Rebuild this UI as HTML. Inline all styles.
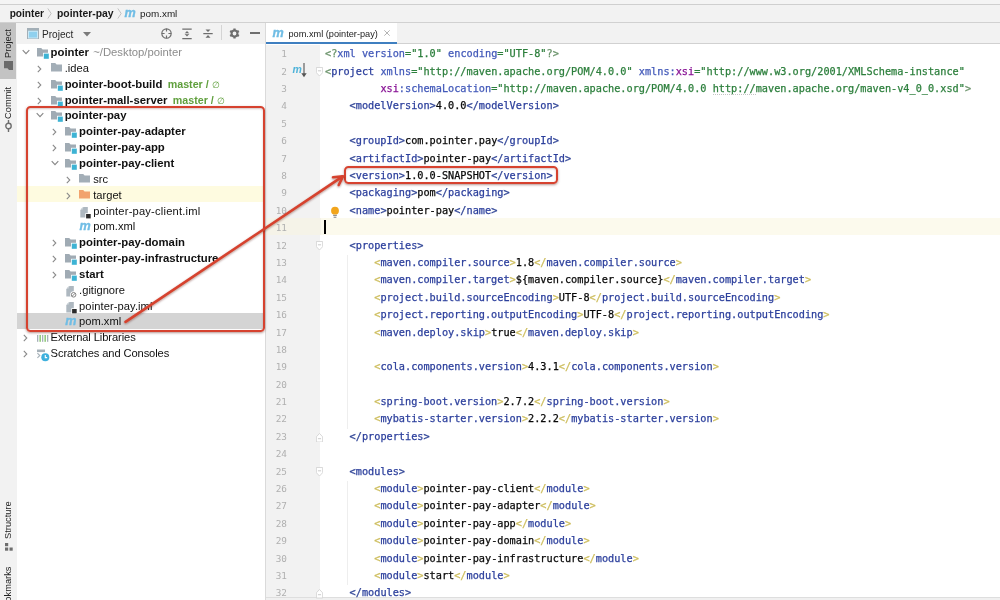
<!DOCTYPE html>
<html><head><meta charset="utf-8"><title>pom.xml</title>
<style>
*{box-sizing:border-box;margin:0;padding:0}
html,body{width:1000px;height:600px;overflow:hidden;background:#fff}
body{position:relative;will-change:transform;font-family:"Liberation Sans", sans-serif;font-size:11px;color:#1a1a1a}
.abs{position:absolute}
#topstrip{left:0;top:0;width:1000px;height:5px;background:#f4f4f4;border-bottom:1px solid #cfcfcf}
#crumb{left:0;top:5px;width:1000px;height:17.500px;background:#f2f2f2;border-bottom:1px solid #d1d1d1}
#crumb span{position:absolute;top:-0.500px;line-height:18px;font-size:9.900px;white-space:nowrap}
#crumb .b{font-weight:bold;font-size:10.400px}
#stripe{left:0;top:23px;width:17px;height:577px;background:#f2f2f2}
.vt{position:absolute;left:0;width:16px;font-size:9.300px;white-space:nowrap;color:#222}
.vt span{position:absolute;transform-origin:0 0;transform:rotate(-90deg);line-height:16px;left:0}
#phead{left:17px;top:23px;width:248px;height:21px;background:#f2f2f2}
#phead .ttl{position:absolute;left:25px;top:1px;line-height:21px;font-size:10.100px;color:#2a2a2a}
#tree{left:17px;top:44px;width:248px;height:556px;background:#fff;overflow:hidden}
#pborder{left:265px;top:23px;width:1px;height:577px;background:#dadada}
.row{position:absolute;left:0;width:248px;height:15.85px;white-space:nowrap}
.row.sel{background:transparent}
#selbg{left:17px;top:313px;width:248px;height:16.300px;background:#d4d4d4}
.row.excl{background:transparent}
#exbg{left:17px;top:186.200px;width:248px;height:15.700px;background:#fefbe0}
.row span.arw,.row span.ico,.row span.lbl{position:absolute;top:0;height:15.85px;line-height:15.85px}
.row .lbl{font-size:11.150px;color:#111}
.row .lbl.b{font-size:11.350px}
.row .lbl.b{font-weight:bold}
.row .path{font-weight:normal;color:#8c8c8c;margin-left:1px;font-size:11.300px}
.row .git i{font-style:normal;font-weight:normal;font-size:8.500px}
.row .git{font-weight:bold;color:#5f9f3c;margin-left:2.200px;font-size:10.700px}
.row svg.ic{position:absolute;top:3.100px;left:0}
.row svg.ar{position:absolute;top:3px;left:0}
.mvn{font-style:italic;font-weight:bold;color:#70bde5;-webkit-text-stroke:0.350px #70bde5;font-size:12.600px;font-family:"Liberation Sans", sans-serif;position:absolute;left:0;top:-0.850px;line-height:15.85px}
#tabs{left:266px;top:23px;width:734px;height:21px;background:#f2f2f2;border-bottom:1px solid #d1d1d1}
#tab{left:266px;top:23px;width:131px;height:21px;background:#fff}
#tabline{left:266px;top:41.600px;width:131px;height:2.500px;background:#3f7fc0}
#gutter{left:266px;top:45px;width:54.500px;height:555px;background:#f2f2f2;border-right:1px solid #e2e2e2}
#editor{left:320px;top:45px;width:681px;height:555px;background:#fff}
#curline{left:320.500px;top:218.20px;width:681px;height:17.300px;background:#fcfaed}
#curline2{left:266px;top:218.20px;width:54.500px;height:17.300px;background:#f5f3e8}
.cl{position:absolute;left:325px;height:17.39px;line-height:17.39px;font-family:"DejaVu Sans Mono", "Liberation Mono", monospace;font-size:10.230px;white-space:pre;color:#080808;-webkit-text-stroke:0.250px currentColor}
.cl span{-webkit-text-stroke:0.250px currentColor}
.ln{position:absolute;left:262px;width:25px;text-align:right;height:17.39px;line-height:17.39px;font-family:"DejaVu Sans Mono", "Liberation Mono", monospace;font-size:9.400px;color:#b0b0b0}
.t{color:#2d409d}.a{color:#4259b9}.b0{color:#6a936a}.b1{color:#2f4496}.b2{color:#cdbd5c}.p{color:#871094}.v{color:#2c7f3c}.x{color:#080808}.g{color:#6a936a}
.u{color:#2c7f3c;border-bottom:1px dotted #c4c4c4}
.redbox{border:2.500px solid #d6422f;border-radius:4.500px;box-shadow:0 1px 2.500px rgba(90,20,10,.45), inset 0 1px 2px rgba(90,20,10,.25)}
</style></head><body>
<div id="topstrip" class="abs"></div>
<div id="crumb" class="abs">
 <span class="b" style="left:9.700px;font-size:10.150px">pointer</span>
 <svg class="abs" style="left:46.800px;top:2px" width="5" height="13" viewBox="0 0 6 13"><path d="M1 0.5l4 6-4 6" fill="none" stroke="#b8b8b8" stroke-width="1"/></svg>
 <span class="b" style="left:57px">pointer-pay</span>
 <svg class="abs" style="left:117px;top:2px" width="5" height="13" viewBox="0 0 6 13"><path d="M1 0.5l4 6-4 6" fill="none" stroke="#b8b8b8" stroke-width="1"/></svg>
 <span class="mvn" style="left:124.500px;top:-1.400px;line-height:18px;font-size:12.600px">m</span>
 <span style="left:140px">pom.xml</span>
</div>
<div id="stripe" class="abs"></div>
<div class="abs" style="left:0;top:23px;width:16px;height:56px;background:#c3c3c3"></div>
<div class="vt" style="top:58px"><span>Project</span></div>
<svg class="abs" style="left:4px;top:61px" width="9" height="9" viewBox="0 0 9 9"><path d="M0 0h9v9h-4l-1.500-1.800h-3.500z" fill="#6a6a6a"/></svg>
<div class="vt" style="top:119px"><span>Commit</span></div>
<svg class="abs" style="left:3px;top:120px" width="11" height="12" viewBox="0 0 11 12"><circle cx="5.500" cy="6" r="2.700" fill="none" stroke="#6e6e6e" stroke-width="1.400"/><path d="M5.500 0v3.300M5.500 8.700V12" stroke="#6e6e6e" stroke-width="1.400"/></svg>
<div class="vt" style="top:539px"><span>Structure</span></div>
<svg class="abs" style="left:5px;top:543px" width="8" height="8" viewBox="0 0 8 8"><g fill="#6e6e6e"><rect x="0" y="0" width="3.200" height="3.200"/><rect x="0" y="4.500" width="3.200" height="3.200"/><rect x="4.500" y="4.500" width="3.200" height="3.200"/></g></svg>
<div class="vt" style="top:613px"><span>Bookmarks</span></div>
<div id="phead" class="abs">
 <svg class="abs" style="left:10px;top:5px" width="12" height="11" viewBox="0 0 12 11"><rect x="0.500" y="0.500" width="11" height="10" fill="#8fd0ee" stroke="#a3afb7"/><rect x="0.500" y="0.500" width="11" height="2.300" fill="#a3afb7"/><rect x="1.500" y="3.300" width="9" height="6.700" fill="none" stroke="#c9e8f6" stroke-width="1"/></svg>
 <span class="ttl">Project</span>
 <svg class="abs" style="left:66px;top:9px" width="8" height="5" viewBox="0 0 8 5"><path d="M0 0h8l-4 4.5z" fill="#7a7a7a"/></svg>
 <svg class="abs" style="left:143.300px;top:3.800px" width="13" height="13" viewBox="0 0 13 13"><circle cx="6.500" cy="6.500" r="4.700" fill="none" stroke="#6e6e6e" stroke-width="1.150"/><path d="M6.500 1.800v2.800M6.500 8.400v2.800M1.800 6.500h2.800M8.400 6.500h2.800" stroke="#6e6e6e" stroke-width="1.150"/></svg>
 <svg class="abs" style="left:165.200px;top:4.500px" width="10" height="12" viewBox="0 0 10 12"><path d="M0.300 1.100h9.400M0.300 10.500h9.400" stroke="#6e6e6e" stroke-width="1.250"/><path d="M5 3l2.400 2.500h-4.800zM5 8.600l2.400-2.500h-4.800z" fill="#6e6e6e" transform="translate(0,0)"/><path d="M3.200 5.800h3.600" stroke="#f2f2f2" stroke-width="0.700"/></svg>
 <svg class="abs" style="left:186.100px;top:4.500px" width="10" height="12" viewBox="0 0 10 12"><path d="M0.300 5.600h9.400" stroke="#6e6e6e" stroke-width="1.250"/><path d="M5 4.100l2.500-2.700h-5zM5 7.100l2.500 2.700h-5z" fill="#6e6e6e"/></svg>
 <div class="abs" style="left:203.600px;top:2px;width:1px;height:15px;background:#d4d4d4"></div>
 <svg class="abs" style="left:211.700px;top:4.700px" width="11" height="11" viewBox="-5.500 -5.500 11 11"><g fill="#6e6e6e"><rect x="-1.150" y="-5" width="2.300" height="2.400" transform="rotate(0)"/><rect x="-1.150" y="-5" width="2.300" height="2.400" transform="rotate(60)"/><rect x="-1.150" y="-5" width="2.300" height="2.400" transform="rotate(120)"/><rect x="-1.150" y="-5" width="2.300" height="2.400" transform="rotate(180)"/><rect x="-1.150" y="-5" width="2.300" height="2.400" transform="rotate(240)"/><rect x="-1.150" y="-5" width="2.300" height="2.400" transform="rotate(300)"/></g><circle cx="0" cy="0" r="2.900" fill="none" stroke="#6e6e6e" stroke-width="2"/></svg>
 <div class="abs" style="left:233px;top:9.400px;width:9.500px;height:1.300px;background:#6e6e6e"></div>
</div>
<div id="selbg" class="abs"></div><div id="exbg" class="abs"></div>
<div id="tree" class="abs" style="top:0;height:600px;background:transparent">
<div class="row" style="top:45.00px"><span class="arw" style="left:4.0px"><svg class="ar" width="10" height="8" viewBox="0 0 10 8"><path d="M1.700 2.200l3.300 3.400 3.300-3.400" fill="none" stroke="#888" stroke-width="1.150"/></svg></span><span class="ico" style="left:19.8px"><svg class="ic" width="13" height="12" viewBox="0 0 13 12"><path d="M0 0h4.200l1.400 1.500h5.400v7h-11z" fill="#a0abb4"/><rect x="6" y="4.800" width="6.200" height="6.500" fill="#ffffff"/><rect x="6.800" y="5.600" width="5" height="5.200" fill="#3db3d4"/></svg></span><span class="lbl b" style="left:33.6px">pointer <span class="path">~/Desktop/pointer</span></span></div>
<div class="row" style="top:60.85px"><span class="arw" style="left:18.0px"><svg class="ar" width="8" height="10" viewBox="0 0 8 10"><path d="M2.800 1.800l3 3.200-3 3.200" fill="none" stroke="#8a8a8a" stroke-width="1.100"/></svg></span><span class="ico" style="left:34.0px"><svg class="ic" style="top:2.400px" width="13" height="12" viewBox="0 0 13 12"><path d="M0 0h4.200l1.400 1.500h5.400v7h-11z" fill="#a3aeb7"/></svg></span><span class="lbl" style="left:47.7px">.idea</span></div>
<div class="row" style="top:76.70px"><span class="arw" style="left:18.0px"><svg class="ar" width="8" height="10" viewBox="0 0 8 10"><path d="M2.800 1.800l3 3.200-3 3.200" fill="none" stroke="#8a8a8a" stroke-width="1.100"/></svg></span><span class="ico" style="left:34.0px"><svg class="ic" width="13" height="12" viewBox="0 0 13 12"><path d="M0 0h4.200l1.400 1.500h5.400v7h-11z" fill="#a0abb4"/><rect x="6" y="4.800" width="6.200" height="6.500" fill="#ffffff"/><rect x="6.800" y="5.600" width="5" height="5.200" fill="#3db3d4"/></svg></span><span class="lbl b" style="left:47.7px">pointer-boot-build <span class="git">master / <i>∅</i></span></span></div>
<div class="row" style="top:92.55px"><span class="arw" style="left:18.0px"><svg class="ar" width="8" height="10" viewBox="0 0 8 10"><path d="M2.800 1.800l3 3.200-3 3.200" fill="none" stroke="#8a8a8a" stroke-width="1.100"/></svg></span><span class="ico" style="left:34.0px"><svg class="ic" width="13" height="12" viewBox="0 0 13 12"><path d="M0 0h4.200l1.400 1.500h5.400v7h-11z" fill="#a0abb4"/><rect x="6" y="4.800" width="6.200" height="6.500" fill="#ffffff"/><rect x="6.800" y="5.600" width="5" height="5.200" fill="#3db3d4"/></svg></span><span class="lbl b" style="left:47.7px">pointer-mall-server <span class="git">master / <i>∅</i></span></span></div>
<div class="row" style="top:108.40px"><span class="arw" style="left:18.0px"><svg class="ar" width="10" height="8" viewBox="0 0 10 8"><path d="M1.700 2.200l3.300 3.400 3.300-3.400" fill="none" stroke="#888" stroke-width="1.150"/></svg></span><span class="ico" style="left:34.0px"><svg class="ic" width="13" height="12" viewBox="0 0 13 12"><path d="M0 0h4.200l1.400 1.500h5.400v7h-11z" fill="#a0abb4"/><rect x="6" y="4.800" width="6.200" height="6.500" fill="#ffffff"/><rect x="6.800" y="5.600" width="5" height="5.200" fill="#3db3d4"/></svg></span><span class="lbl b" style="left:47.7px">pointer-pay</span></div>
<div class="row" style="top:124.25px"><span class="arw" style="left:32.5px"><svg class="ar" width="8" height="10" viewBox="0 0 8 10"><path d="M2.800 1.800l3 3.200-3 3.200" fill="none" stroke="#8a8a8a" stroke-width="1.100"/></svg></span><span class="ico" style="left:48.3px"><svg class="ic" width="13" height="12" viewBox="0 0 13 12"><path d="M0 0h4.200l1.400 1.500h5.400v7h-11z" fill="#a0abb4"/><rect x="6" y="4.800" width="6.200" height="6.500" fill="#ffffff"/><rect x="6.800" y="5.600" width="5" height="5.200" fill="#3db3d4"/></svg></span><span class="lbl b" style="left:62.1px">pointer-pay-adapter</span></div>
<div class="row" style="top:140.10px"><span class="arw" style="left:32.5px"><svg class="ar" width="8" height="10" viewBox="0 0 8 10"><path d="M2.800 1.800l3 3.200-3 3.200" fill="none" stroke="#8a8a8a" stroke-width="1.100"/></svg></span><span class="ico" style="left:48.3px"><svg class="ic" width="13" height="12" viewBox="0 0 13 12"><path d="M0 0h4.200l1.400 1.500h5.400v7h-11z" fill="#a0abb4"/><rect x="6" y="4.800" width="6.200" height="6.500" fill="#ffffff"/><rect x="6.800" y="5.600" width="5" height="5.200" fill="#3db3d4"/></svg></span><span class="lbl b" style="left:62.1px">pointer-pay-app</span></div>
<div class="row" style="top:155.95px"><span class="arw" style="left:32.5px"><svg class="ar" width="10" height="8" viewBox="0 0 10 8"><path d="M1.700 2.200l3.300 3.400 3.300-3.400" fill="none" stroke="#888" stroke-width="1.150"/></svg></span><span class="ico" style="left:48.3px"><svg class="ic" width="13" height="12" viewBox="0 0 13 12"><path d="M0 0h4.200l1.400 1.500h5.400v7h-11z" fill="#a0abb4"/><rect x="6" y="4.800" width="6.200" height="6.500" fill="#ffffff"/><rect x="6.800" y="5.600" width="5" height="5.200" fill="#3db3d4"/></svg></span><span class="lbl b" style="left:62.1px">pointer-pay-client</span></div>
<div class="row" style="top:171.80px"><span class="arw" style="left:46.5px"><svg class="ar" width="8" height="10" viewBox="0 0 8 10"><path d="M2.800 1.800l3 3.200-3 3.200" fill="none" stroke="#8a8a8a" stroke-width="1.100"/></svg></span><span class="ico" style="left:62.4px"><svg class="ic" style="top:2.400px" width="13" height="12" viewBox="0 0 13 12"><path d="M0 0h4.200l1.400 1.500h5.400v7h-11z" fill="#a3aeb7"/></svg></span><span class="lbl" style="left:76.2px">src</span></div>
<div class="row excl" style="top:187.65px"><span class="arw" style="left:46.5px"><svg class="ar" width="8" height="10" viewBox="0 0 8 10"><path d="M2.800 1.800l3 3.200-3 3.200" fill="none" stroke="#8a8a8a" stroke-width="1.100"/></svg></span><span class="ico" style="left:62.4px"><svg class="ic" style="top:2.400px" width="13" height="12" viewBox="0 0 13 12"><path d="M0 0h4.200l1.400 1.500h5.400v7h-11z" fill="#f2a36d"/></svg></span><span class="lbl" style="left:76.2px">target</span></div>
<div class="row" style="top:203.50px"><span class="ico" style="left:62.4px"><svg class="ic" width="13" height="13" viewBox="-1.300 0 13 13"><path d="M3.200 0h4.300v10.400h-7.500v-7.200z" fill="#aeb8c0"/><path d="M2.600 0v2.600h-2.600z" fill="#ccd3d8"/><rect x="5" y="6.200" width="5.800" height="5.600" fill="#fff"/><rect x="5.800" y="7" width="4.600" height="4.400" fill="#2b2b2b"/></svg></span><span class="lbl" style="left:76.2px;letter-spacing:0.20px">pointer-pay-client.iml</span></div>
<div class="row" style="top:219.35px"><span class="ico" style="left:62.4px"><span class="ic mvn">m</span></span><span class="lbl" style="left:76.2px">pom.xml</span></div>
<div class="row" style="top:235.20px"><span class="arw" style="left:32.5px"><svg class="ar" width="8" height="10" viewBox="0 0 8 10"><path d="M2.800 1.800l3 3.200-3 3.200" fill="none" stroke="#8a8a8a" stroke-width="1.100"/></svg></span><span class="ico" style="left:48.3px"><svg class="ic" width="13" height="12" viewBox="0 0 13 12"><path d="M0 0h4.200l1.400 1.500h5.400v7h-11z" fill="#a0abb4"/><rect x="6" y="4.800" width="6.200" height="6.500" fill="#ffffff"/><rect x="6.800" y="5.600" width="5" height="5.200" fill="#3db3d4"/></svg></span><span class="lbl b" style="left:62.1px">pointer-pay-domain</span></div>
<div class="row" style="top:251.05px"><span class="arw" style="left:32.5px"><svg class="ar" width="8" height="10" viewBox="0 0 8 10"><path d="M2.800 1.800l3 3.200-3 3.200" fill="none" stroke="#8a8a8a" stroke-width="1.100"/></svg></span><span class="ico" style="left:48.3px"><svg class="ic" width="13" height="12" viewBox="0 0 13 12"><path d="M0 0h4.200l1.400 1.500h5.400v7h-11z" fill="#a0abb4"/><rect x="6" y="4.800" width="6.200" height="6.500" fill="#ffffff"/><rect x="6.800" y="5.600" width="5" height="5.200" fill="#3db3d4"/></svg></span><span class="lbl b" style="left:62.1px">pointer-pay-infrastructure</span></div>
<div class="row" style="top:266.90px"><span class="arw" style="left:32.5px"><svg class="ar" width="8" height="10" viewBox="0 0 8 10"><path d="M2.800 1.800l3 3.200-3 3.200" fill="none" stroke="#8a8a8a" stroke-width="1.100"/></svg></span><span class="ico" style="left:48.3px"><svg class="ic" width="13" height="12" viewBox="0 0 13 12"><path d="M0 0h4.200l1.400 1.500h5.400v7h-11z" fill="#a0abb4"/><rect x="6" y="4.800" width="6.200" height="6.500" fill="#ffffff"/><rect x="6.800" y="5.600" width="5" height="5.200" fill="#3db3d4"/></svg></span><span class="lbl b" style="left:62.1px">start</span></div>
<div class="row" style="top:282.75px"><span class="ico" style="left:48.3px"><svg class="ic" width="13" height="13" viewBox="-1.300 0 13 13"><path d="M3.200 0h4.300v10.400h-7.500v-7.200z" fill="#aeb8c0"/><path d="M2.600 0v2.600h-2.600z" fill="#ccd3d8"/><circle cx="7.300" cy="8.800" r="3.500" fill="#fff"/><circle cx="7.300" cy="8.800" r="2.300" fill="none" stroke="#777" stroke-width="0.900"/><path d="M5.700 10.400l3.200-3.200" stroke="#777" stroke-width="0.900"/></svg></span><span class="lbl" style="left:62.1px">.gitignore</span></div>
<div class="row" style="top:298.60px"><span class="ico" style="left:48.3px"><svg class="ic" width="13" height="13" viewBox="-1.300 0 13 13"><path d="M3.200 0h4.300v10.400h-7.500v-7.200z" fill="#aeb8c0"/><path d="M2.600 0v2.600h-2.600z" fill="#ccd3d8"/><rect x="5" y="6.200" width="5.800" height="5.600" fill="#fff"/><rect x="5.800" y="7" width="4.600" height="4.400" fill="#2b2b2b"/></svg></span><span class="lbl" style="left:62.1px;letter-spacing:0.08px">pointer-pay.iml</span></div>
<div class="row sel" style="top:314.45px"><span class="ico" style="left:48.3px"><span class="ic mvn">m</span></span><span class="lbl" style="left:62.1px">pom.xml</span></div>
<div class="row" style="top:330.30px"><span class="arw" style="left:4.0px"><svg class="ar" width="8" height="10" viewBox="0 0 8 10"><path d="M2.800 1.800l3 3.200-3 3.200" fill="none" stroke="#8a8a8a" stroke-width="1.100"/></svg></span><span class="ico" style="left:19.8px"><svg class="ic" width="12" height="12" viewBox="0 0 12 12"><g fill="#a6b1b9"><rect x="0" y="2" width="1.300" height="6.800"/><rect x="5" y="2" width="1.300" height="6.800"/><rect x="10" y="2" width="1.300" height="6.800"/></g><g fill="#7cc15f"><rect x="2.500" y="2" width="1.300" height="6.800"/><rect x="7.500" y="2" width="1.300" height="6.800"/></g></svg></span><span class="lbl" style="left:33.6px;letter-spacing:-0.09px">External Libraries</span></div>
<div class="row" style="top:346.15px"><span class="arw" style="left:4.0px"><svg class="ar" width="8" height="10" viewBox="0 0 8 10"><path d="M2.800 1.800l3 3.200-3 3.200" fill="none" stroke="#8a8a8a" stroke-width="1.100"/></svg></span><span class="ico" style="left:19.8px"><svg class="ic" width="13" height="14" viewBox="0 0 13 14"><path d="M0 0.500h8v2.600h-8z" fill="#a6b1b9"/><path d="M0.400 4.200l2.400 2.300-2.400 2.300" fill="none" stroke="#a6b1b9" stroke-width="1.100"/><circle cx="8.300" cy="8.300" r="4" fill="#3eb0dd"/><path d="M8.300 6v2.600h1.900" fill="none" stroke="#fff" stroke-width="1.100"/></svg></span><span class="lbl" style="left:33.6px;letter-spacing:-0.10px">Scratches and Consoles</span></div>
</div>
<div id="pborder" class="abs"></div>
<div id="tabs" class="abs"></div>
<div id="tab" class="abs">
 <span class="mvn" style="left:6.500px;top:0.500px;line-height:18px">m</span>
 <span class="abs" style="left:22.500px;top:0.500px;line-height:20px;font-size:9.200px;white-space:nowrap;color:#222">pom.xml (pointer-pay)</span>
 <svg class="abs" style="left:118px;top:7.100px" width="6" height="6" viewBox="0 0 6 6"><path d="M0.300 0.300l5.400 5.400M5.700 0.300l-5.400 5.400" stroke="#b4b4b4" stroke-width="1"/></svg>
</div>
<div id="tabline" class="abs"></div>
<div id="gutter" class="abs"></div>
<div id="editor" class="abs"></div>
<div id="curline" class="abs"></div><div id="curline2" class="abs"></div>
<div class="abs" style="left:324.300px;top:220.00px;width:1.600px;height:13.500px;background:#000"></div>
<div class="abs" style="left:347px;top:254.88px;width:1px;height:173.90px;background:#eeeeee"></div>
<div class="abs" style="left:347px;top:480.95px;width:1px;height:104.34px;background:#eeeeee"></div>
<div class="abs" style="left:266px;top:596.500px;width:734px;height:4px;background:#f0f0f0;border-top:1px solid #dedede"></div>
<div class="ln" style="top:45.30px">1</div>
<div class="ln" style="top:62.69px">2</div>
<div class="ln" style="top:80.08px">3</div>
<div class="ln" style="top:97.47px">4</div>
<div class="ln" style="top:114.86px">5</div>
<div class="ln" style="top:132.25px">6</div>
<div class="ln" style="top:149.64px">7</div>
<div class="ln" style="top:167.03px">8</div>
<div class="ln" style="top:184.42px">9</div>
<div class="ln" style="top:201.81px">10</div>
<div class="ln" style="top:219.20px">11</div>
<div class="ln" style="top:236.59px">12</div>
<div class="ln" style="top:253.98px">13</div>
<div class="ln" style="top:271.37px">14</div>
<div class="ln" style="top:288.76px">15</div>
<div class="ln" style="top:306.15px">16</div>
<div class="ln" style="top:323.54px">17</div>
<div class="ln" style="top:340.93px">18</div>
<div class="ln" style="top:358.32px">19</div>
<div class="ln" style="top:375.71px">20</div>
<div class="ln" style="top:393.10px">21</div>
<div class="ln" style="top:410.49px">22</div>
<div class="ln" style="top:427.88px">23</div>
<div class="ln" style="top:445.27px">24</div>
<div class="ln" style="top:462.66px">25</div>
<div class="ln" style="top:480.05px">26</div>
<div class="ln" style="top:497.44px">27</div>
<div class="ln" style="top:514.83px">28</div>
<div class="ln" style="top:532.22px">29</div>
<div class="ln" style="top:549.61px">30</div>
<div class="ln" style="top:567.00px">31</div>
<div class="ln" style="top:584.39px">32</div>
<div class="cl" style="top:45.30px"><span class="g">&lt;?</span><span class="a">xml version</span><span class="v">="1.0"</span><span class="a"> encoding</span><span class="v">="UTF-8"</span><span class="g">?&gt;</span></div>
<div class="cl" style="top:62.69px"><span class="b0">&lt;</span><span class="t">project</span><span class="a"> xmlns</span><span class="v">="http://maven.apache.org/POM/4.0.0"</span><span class="a"> xmlns:</span><span class="p">xsi</span><span class="v">="http://www.w3.org/2001/XMLSchema-instance"</span></div>
<div class="cl" style="top:80.08px"><span class="x">         </span><span class="p">xsi</span><span class="a">:schemaLocation</span><span class="v">="http://maven.apache.org/POM/4.0.0 </span><span class="u">http://</span><span class="v">maven.apache.org/maven-v4_0_0.xsd</span><span class="v">"</span><span class="b0">&gt;</span></div>
<div class="cl" style="top:97.47px"><span class="x">    </span><span class="b1">&lt;</span><span class="t">modelVersion</span><span class="b1">&gt;</span><span class="x">4.0.0</span><span class="b1">&lt;/</span><span class="t">modelVersion</span><span class="b1">&gt;</span></div>
<div class="cl" style="top:114.86px"></div>
<div class="cl" style="top:132.25px"><span class="x">    </span><span class="b1">&lt;</span><span class="t">groupId</span><span class="b1">&gt;</span><span class="x">com.pointer.pay</span><span class="b1">&lt;/</span><span class="t">groupId</span><span class="b1">&gt;</span></div>
<div class="cl" style="top:149.64px"><span class="x">    </span><span class="b1">&lt;</span><span class="t">artifactId</span><span class="b1">&gt;</span><span class="x">pointer-pay</span><span class="b1">&lt;/</span><span class="t">artifactId</span><span class="b1">&gt;</span></div>
<div class="cl" style="top:167.03px"><span class="x">    </span><span class="b1">&lt;</span><span class="t">version</span><span class="b1">&gt;</span><span class="x">1.0.0-SNAPSHOT</span><span class="b1">&lt;/</span><span class="t">version</span><span class="b1">&gt;</span></div>
<div class="cl" style="top:184.42px"><span class="x">    </span><span class="b1">&lt;</span><span class="t">packaging</span><span class="b1">&gt;</span><span class="x">pom</span><span class="b1">&lt;/</span><span class="t">packaging</span><span class="b1">&gt;</span></div>
<div class="cl" style="top:201.81px"><span class="x">    </span><span class="b1">&lt;</span><span class="t">name</span><span class="b1">&gt;</span><span class="x">pointer-pay</span><span class="b1">&lt;/</span><span class="t">name</span><span class="b1">&gt;</span></div>
<div class="cl" style="top:219.20px"></div>
<div class="cl" style="top:236.59px"><span class="x">    </span><span class="b1">&lt;</span><span class="t">properties</span><span class="b1">&gt;</span></div>
<div class="cl" style="top:253.98px"><span class="x">        </span><span class="b2">&lt;</span><span class="t">maven.compiler.source</span><span class="b2">&gt;</span><span class="x">1.8</span><span class="b2">&lt;/</span><span class="t">maven.compiler.source</span><span class="b2">&gt;</span></div>
<div class="cl" style="top:271.37px"><span class="x">        </span><span class="b2">&lt;</span><span class="t">maven.compiler.target</span><span class="b2">&gt;</span><span class="x">${maven.compiler.source}</span><span class="b2">&lt;/</span><span class="t">maven.compiler.target</span><span class="b2">&gt;</span></div>
<div class="cl" style="top:288.76px"><span class="x">        </span><span class="b2">&lt;</span><span class="t">project.build.sourceEncoding</span><span class="b2">&gt;</span><span class="x">UTF-8</span><span class="b2">&lt;/</span><span class="t">project.build.sourceEncoding</span><span class="b2">&gt;</span></div>
<div class="cl" style="top:306.15px"><span class="x">        </span><span class="b2">&lt;</span><span class="t">project.reporting.outputEncoding</span><span class="b2">&gt;</span><span class="x">UTF-8</span><span class="b2">&lt;/</span><span class="t">project.reporting.outputEncoding</span><span class="b2">&gt;</span></div>
<div class="cl" style="top:323.54px"><span class="x">        </span><span class="b2">&lt;</span><span class="t">maven.deploy.skip</span><span class="b2">&gt;</span><span class="x">true</span><span class="b2">&lt;/</span><span class="t">maven.deploy.skip</span><span class="b2">&gt;</span></div>
<div class="cl" style="top:340.93px"></div>
<div class="cl" style="top:358.32px"><span class="x">        </span><span class="b2">&lt;</span><span class="t">cola.components.version</span><span class="b2">&gt;</span><span class="x">4.3.1</span><span class="b2">&lt;/</span><span class="t">cola.components.version</span><span class="b2">&gt;</span></div>
<div class="cl" style="top:375.71px"></div>
<div class="cl" style="top:393.10px"><span class="x">        </span><span class="b2">&lt;</span><span class="t">spring-boot.version</span><span class="b2">&gt;</span><span class="x">2.7.2</span><span class="b2">&lt;/</span><span class="t">spring-boot.version</span><span class="b2">&gt;</span></div>
<div class="cl" style="top:410.49px"><span class="x">        </span><span class="b2">&lt;</span><span class="t">mybatis-starter.version</span><span class="b2">&gt;</span><span class="x">2.2.2</span><span class="b2">&lt;/</span><span class="t">mybatis-starter.version</span><span class="b2">&gt;</span></div>
<div class="cl" style="top:427.88px"><span class="x">    </span><span class="b1">&lt;/</span><span class="t">properties</span><span class="b1">&gt;</span></div>
<div class="cl" style="top:445.27px"></div>
<div class="cl" style="top:462.66px"><span class="x">    </span><span class="b1">&lt;</span><span class="t">modules</span><span class="b1">&gt;</span></div>
<div class="cl" style="top:480.05px"><span class="x">        </span><span class="b2">&lt;</span><span class="t">module</span><span class="b2">&gt;</span><span class="x">pointer-pay-client</span><span class="b2">&lt;/</span><span class="t">module</span><span class="b2">&gt;</span></div>
<div class="cl" style="top:497.44px"><span class="x">        </span><span class="b2">&lt;</span><span class="t">module</span><span class="b2">&gt;</span><span class="x">pointer-pay-adapter</span><span class="b2">&lt;/</span><span class="t">module</span><span class="b2">&gt;</span></div>
<div class="cl" style="top:514.83px"><span class="x">        </span><span class="b2">&lt;</span><span class="t">module</span><span class="b2">&gt;</span><span class="x">pointer-pay-app</span><span class="b2">&lt;/</span><span class="t">module</span><span class="b2">&gt;</span></div>
<div class="cl" style="top:532.22px"><span class="x">        </span><span class="b2">&lt;</span><span class="t">module</span><span class="b2">&gt;</span><span class="x">pointer-pay-domain</span><span class="b2">&lt;/</span><span class="t">module</span><span class="b2">&gt;</span></div>
<div class="cl" style="top:549.61px"><span class="x">        </span><span class="b2">&lt;</span><span class="t">module</span><span class="b2">&gt;</span><span class="x">pointer-pay-infrastructure</span><span class="b2">&lt;/</span><span class="t">module</span><span class="b2">&gt;</span></div>
<div class="cl" style="top:567.00px"><span class="x">        </span><span class="b2">&lt;</span><span class="t">module</span><span class="b2">&gt;</span><span class="x">start</span><span class="b2">&lt;/</span><span class="t">module</span><span class="b2">&gt;</span></div>
<div class="cl" style="top:584.39px"><span class="x">    </span><span class="b1">&lt;/</span><span class="t">modules</span><span class="b1">&gt;</span></div>
<!-- gutter icons -->
<span class="abs" style="left:292.500px;top:62px;font-style:italic;font-weight:bold;color:#4fb3d9;font-size:10.500px;line-height:14px">m</span>
<svg class="abs" style="left:300px;top:62.500px" width="8" height="15" viewBox="0 0 8 15"><path d="M4 0v12" stroke="#555" stroke-width="1.100"/><path d="M1.300 10.300l2.700 3.900 2.700-3.900z" fill="#555"/></svg>
<svg class="abs" style="left:316.300px;top:67.3px" width="7" height="9.500" viewBox="0 0 9 10" preserveAspectRatio="none"><path d="M0.500 0.500h8v5.500l-4 3.500l-4-3.500z" fill="#fff" stroke="#d2d2d2"/><path d="M2.500 4h4" stroke="#c4c4c4"/></svg>
<svg class="abs" style="left:316.300px;top:241.2px" width="7" height="9.500" viewBox="0 0 9 10" preserveAspectRatio="none"><path d="M0.500 0.500h8v5.500l-4 3.500l-4-3.500z" fill="#fff" stroke="#d2d2d2"/><path d="M2.500 4h4" stroke="#c4c4c4"/></svg>
<svg class="abs" style="left:316.300px;top:432.5px" width="7" height="9.500" viewBox="0 0 9 10" preserveAspectRatio="none"><path d="M0.500 9.500h8v-5.500l-4-3.500l-4 3.500z" fill="#fff" stroke="#d2d2d2"/><path d="M2.500 6h4" stroke="#c4c4c4"/></svg>
<svg class="abs" style="left:316.300px;top:467.3px" width="7" height="9.500" viewBox="0 0 9 10" preserveAspectRatio="none"><path d="M0.500 0.500h8v5.500l-4 3.500l-4-3.500z" fill="#fff" stroke="#d2d2d2"/><path d="M2.500 4h4" stroke="#c4c4c4"/></svg>
<svg class="abs" style="left:316.300px;top:589.0px" width="7" height="9.500" viewBox="0 0 9 10" preserveAspectRatio="none"><path d="M0.500 9.500h8v-5.500l-4-3.500l-4 3.500z" fill="#fff" stroke="#d2d2d2"/><path d="M2.500 6h4" stroke="#c4c4c4"/></svg>
<svg class="abs" style="left:330.200px;top:205.500px" width="10" height="13" viewBox="0 0 10 14"><circle cx="5" cy="5" r="4.200" fill="#f2a51c"/><rect x="3" y="9.500" width="4" height="1.200" fill="#8a8a8a"/><rect x="3.500" y="11.500" width="3" height="1.200" fill="#8a8a8a"/></svg>
<!-- red annotations -->
<div class="abs redbox" style="left:25.700px;top:106px;width:239.500px;height:226px"></div>
<div class="abs redbox" style="left:344.100px;top:165.900px;width:213.800px;height:18px;border-width:2.800px"></div>
<svg class="abs" style="left:0;top:0" width="1000" height="600" viewBox="0 0 1000 600">
 <defs><filter id="sh" x="-5%" y="-5%" width="110%" height="115%"><feDropShadow dx="0" dy="1" stdDeviation="0.900" flood-color="#50140a" flood-opacity="0.450"/></filter></defs>
 <g fill="none" stroke="#d6422f" stroke-width="2.600" stroke-linecap="round" stroke-linejoin="round" filter="url(#sh)">
 <path d="M125.500 321.800L342.300 176.700"/>
 <path d="M333 177.200L343 176.400L338.700 185"/>
 </g>
</svg>
</body></html>
